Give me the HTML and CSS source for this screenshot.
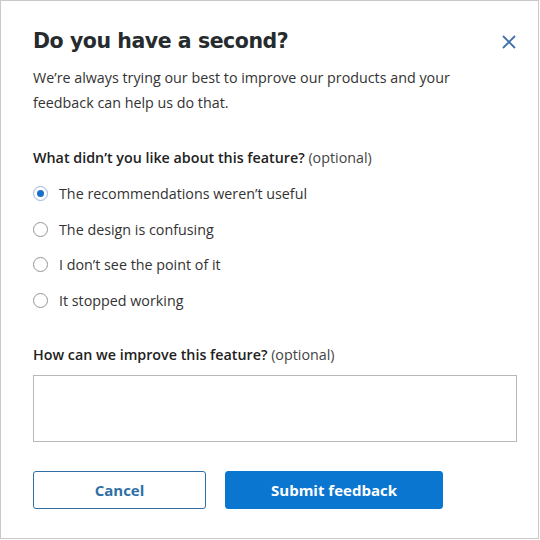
FILE: index.html
```html
<!DOCTYPE html>
<html>
<head>
<meta charset="utf-8">
<link rel="stylesheet" href="styles.css">
</head>
<body>
<div class="dialog">
  <div class="header">
    <h1 class="title">Do you have a second?</h1>
    <button class="close" aria-label="Close">
      <svg width="14" height="14" viewBox="0 0 14 14"><path d="M1 1L13 13M13 1L1 13" stroke="#3f6fa8" stroke-width="1.8" fill="none"/></svg>
    </button>
  </div>
  <p class="intro">We’re always trying our best to improve our products and your feedback can help us do that.</p>
  <div class="question">What didn’t you like about this feature? <span class="opt">(optional)</span></div>
  <div class="options">
    <label class="option"><span class="radio checked"></span>The recommendations weren’t useful</label>
    <label class="option"><span class="radio"></span>The design is confusing</label>
    <label class="option"><span class="radio"></span>I don’t see the point of it</label>
    <label class="option"><span class="radio"></span>It stopped working</label>
  </div>
  <div class="question q2">How can we improve this feature? <span class="opt">(optional)</span></div>
  <div class="textarea"></div>
  <div class="actions">
    <button class="btn cancel">Cancel</button>
    <button class="btn submit">Submit feedback</button>
  </div>
</div>
</body>
</html>
```
FILE: styles.css
```css
html, body { margin: 0; padding: 0; background: #fff; }
body { font-family: "Open Sans", "Liberation Sans", sans-serif; color: #333; }
.dialog {
  box-sizing: border-box;
  width: 539px;
  height: 539px;
  border: 1px solid #c9c9c9;
  padding: 0 23px 0 32px;
}
.header { display: flex; align-items: center; justify-content: space-between; padding-top: 25px; height: 30px; }
.title {
  margin: 0;
  font-family: "DejaVu Sans", sans-serif;
  font-weight: 700;
  font-size: 20.5px;
  letter-spacing: -0.45px;
  color: #262b2e;
  line-height: 30px;
}
.close { border: 0; background: none; padding: 0; margin-right: -1px; margin-top: 1px; width: 14px; height: 14px; display: flex; }
.intro { margin: 9px 0 0; font-size: 14.3px; line-height: 25px; color: #333; max-width: 440px; }
.question { margin-top: 33px; font-size: 14.3px; font-weight: 600; color: #222; line-height: 20px; }
.question .opt { font-weight: 400; color: #444; }
.options { display: flex; flex-direction: column; gap: 14.5px; margin-top: 15px; }
.option { display: flex; align-items: center; font-size: 14.3px; line-height: 21px; color: #333; }
.radio {
  box-sizing: border-box;
  width: 15px; height: 15px; border-radius: 50%;
  border: 1px solid #959595;
  margin-right: 11px;
  display: flex; align-items: center; justify-content: center;
}
.radio.checked { border-color: #9ab5d8; }
.radio.checked::after { content: ""; width: 7px; height: 7px; border-radius: 50%; background: #1a6fc9; }
.q2 { margin-top: 34.5px; }
.textarea { box-sizing: border-box; margin-top: 10px; width: 484px; height: 67px; border: 1px solid #b8b8b8; }
.actions { display: flex; gap: 19px; margin-top: 29px; }
.btn {
  box-sizing: border-box; height: 38px; border-radius: 3px;
  font-family: "Open Sans", sans-serif; font-size: 15px; font-weight: 700;
}
.cancel { width: 173px; background: #fff; border: 1px solid #2f6fa5; color: #2f6fa5; }
.submit { width: 218px; background: #0a76d0; border: 1px solid #0a76d0; color: #fff; }
```
